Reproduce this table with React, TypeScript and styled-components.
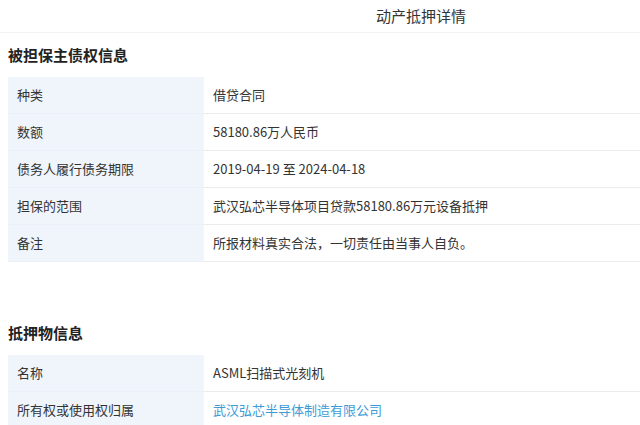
import { FC, Fragment } from 'react'
import styled, { createGlobalStyle } from 'styled-components'

const GlobalStyle = createGlobalStyle`
  body {
    margin: 0;
    background: #ffffff;
    font-family: "Noto Sans CJK SC", "Noto Sans", sans-serif;
    color: #333333;
  }
`

const Page = styled.div`
  width: 640px;
  height: 425px;
  overflow: hidden;
`

const TopBar = styled.header`
  height: 32px;
  line-height: 32px;
  padding-left: 202px;
  text-align: center;
  font-size: 15px;
  color: #333;
  border-bottom: 1px solid #f3f3f3;
`

const Section = styled.section<{ gap?: number }>`
  padding-left: 8px;
  margin-top: ${(p) => p.gap ?? 0}px;
`

const SectionTitle = styled.h2`
  margin: 0;
  height: 44px;
  line-height: 44px;
  font-size: 15px;
  font-weight: 700;
  color: #222;
`

const Table = styled.div`
  display: grid;
  grid-template-columns: 195px 1fr;
  font-size: 13px;
`

const Label = styled.div`
  height: 36px;
  line-height: 36px;
  padding-left: 9px;
  background: #eff5fb;
  border-bottom: 1px solid #e9f0f8;
  color: #333;
`

const Value = styled.div<{ $link?: boolean }>`
  height: 36px;
  line-height: 36px;
  padding-left: 9px;
  border-bottom: 1px solid #ececec;
  border-left: 1px solid #f4f6f9;
  color: ${(p) => (p.$link ? '#3d9bd6' : '#333')};
`

type Row = { label: string; value: string; link?: boolean }

const claimRows: Row[] = [
  { label: '种类', value: '借贷合同' },
  { label: '数额', value: '58180.86万人民币' },
  { label: '债务人履行债务期限', value: '2019-04-19 至 2024-04-18' },
  { label: '担保的范围', value: '武汉弘芯半导体项目贷款58180.86万元设备抵押' },
  { label: '备注', value: '所报材料真实合法，一切责任由当事人自负。' },
]

const collateralRows: Row[] = [
  { label: '名称', value: 'ASML扫描式光刻机' },
  { label: '所有权或使用权归属', value: '武汉弘芯半导体制造有限公司', link: true },
]

const InfoTable: FC<{ rows: Row[] }> = ({ rows }) => (
  <Table>
    {rows.map((r) => (
      <Fragment key={r.label}>
        <Label>{r.label}</Label>
        <Value $link={r.link}>{r.value}</Value>
      </Fragment>
    ))}
  </Table>
)

const App: FC = () => {
  return (
    <Page>
      <GlobalStyle />
      <TopBar>动产抵押详情</TopBar>
      <Section>
        <SectionTitle>被担保主债权信息</SectionTitle>
        <InfoTable rows={claimRows} />
      </Section>
      <Section gap={49}>
        <SectionTitle>抵押物信息</SectionTitle>
        <InfoTable rows={collateralRows} />
      </Section>
    </Page>
  )
}

export default App
